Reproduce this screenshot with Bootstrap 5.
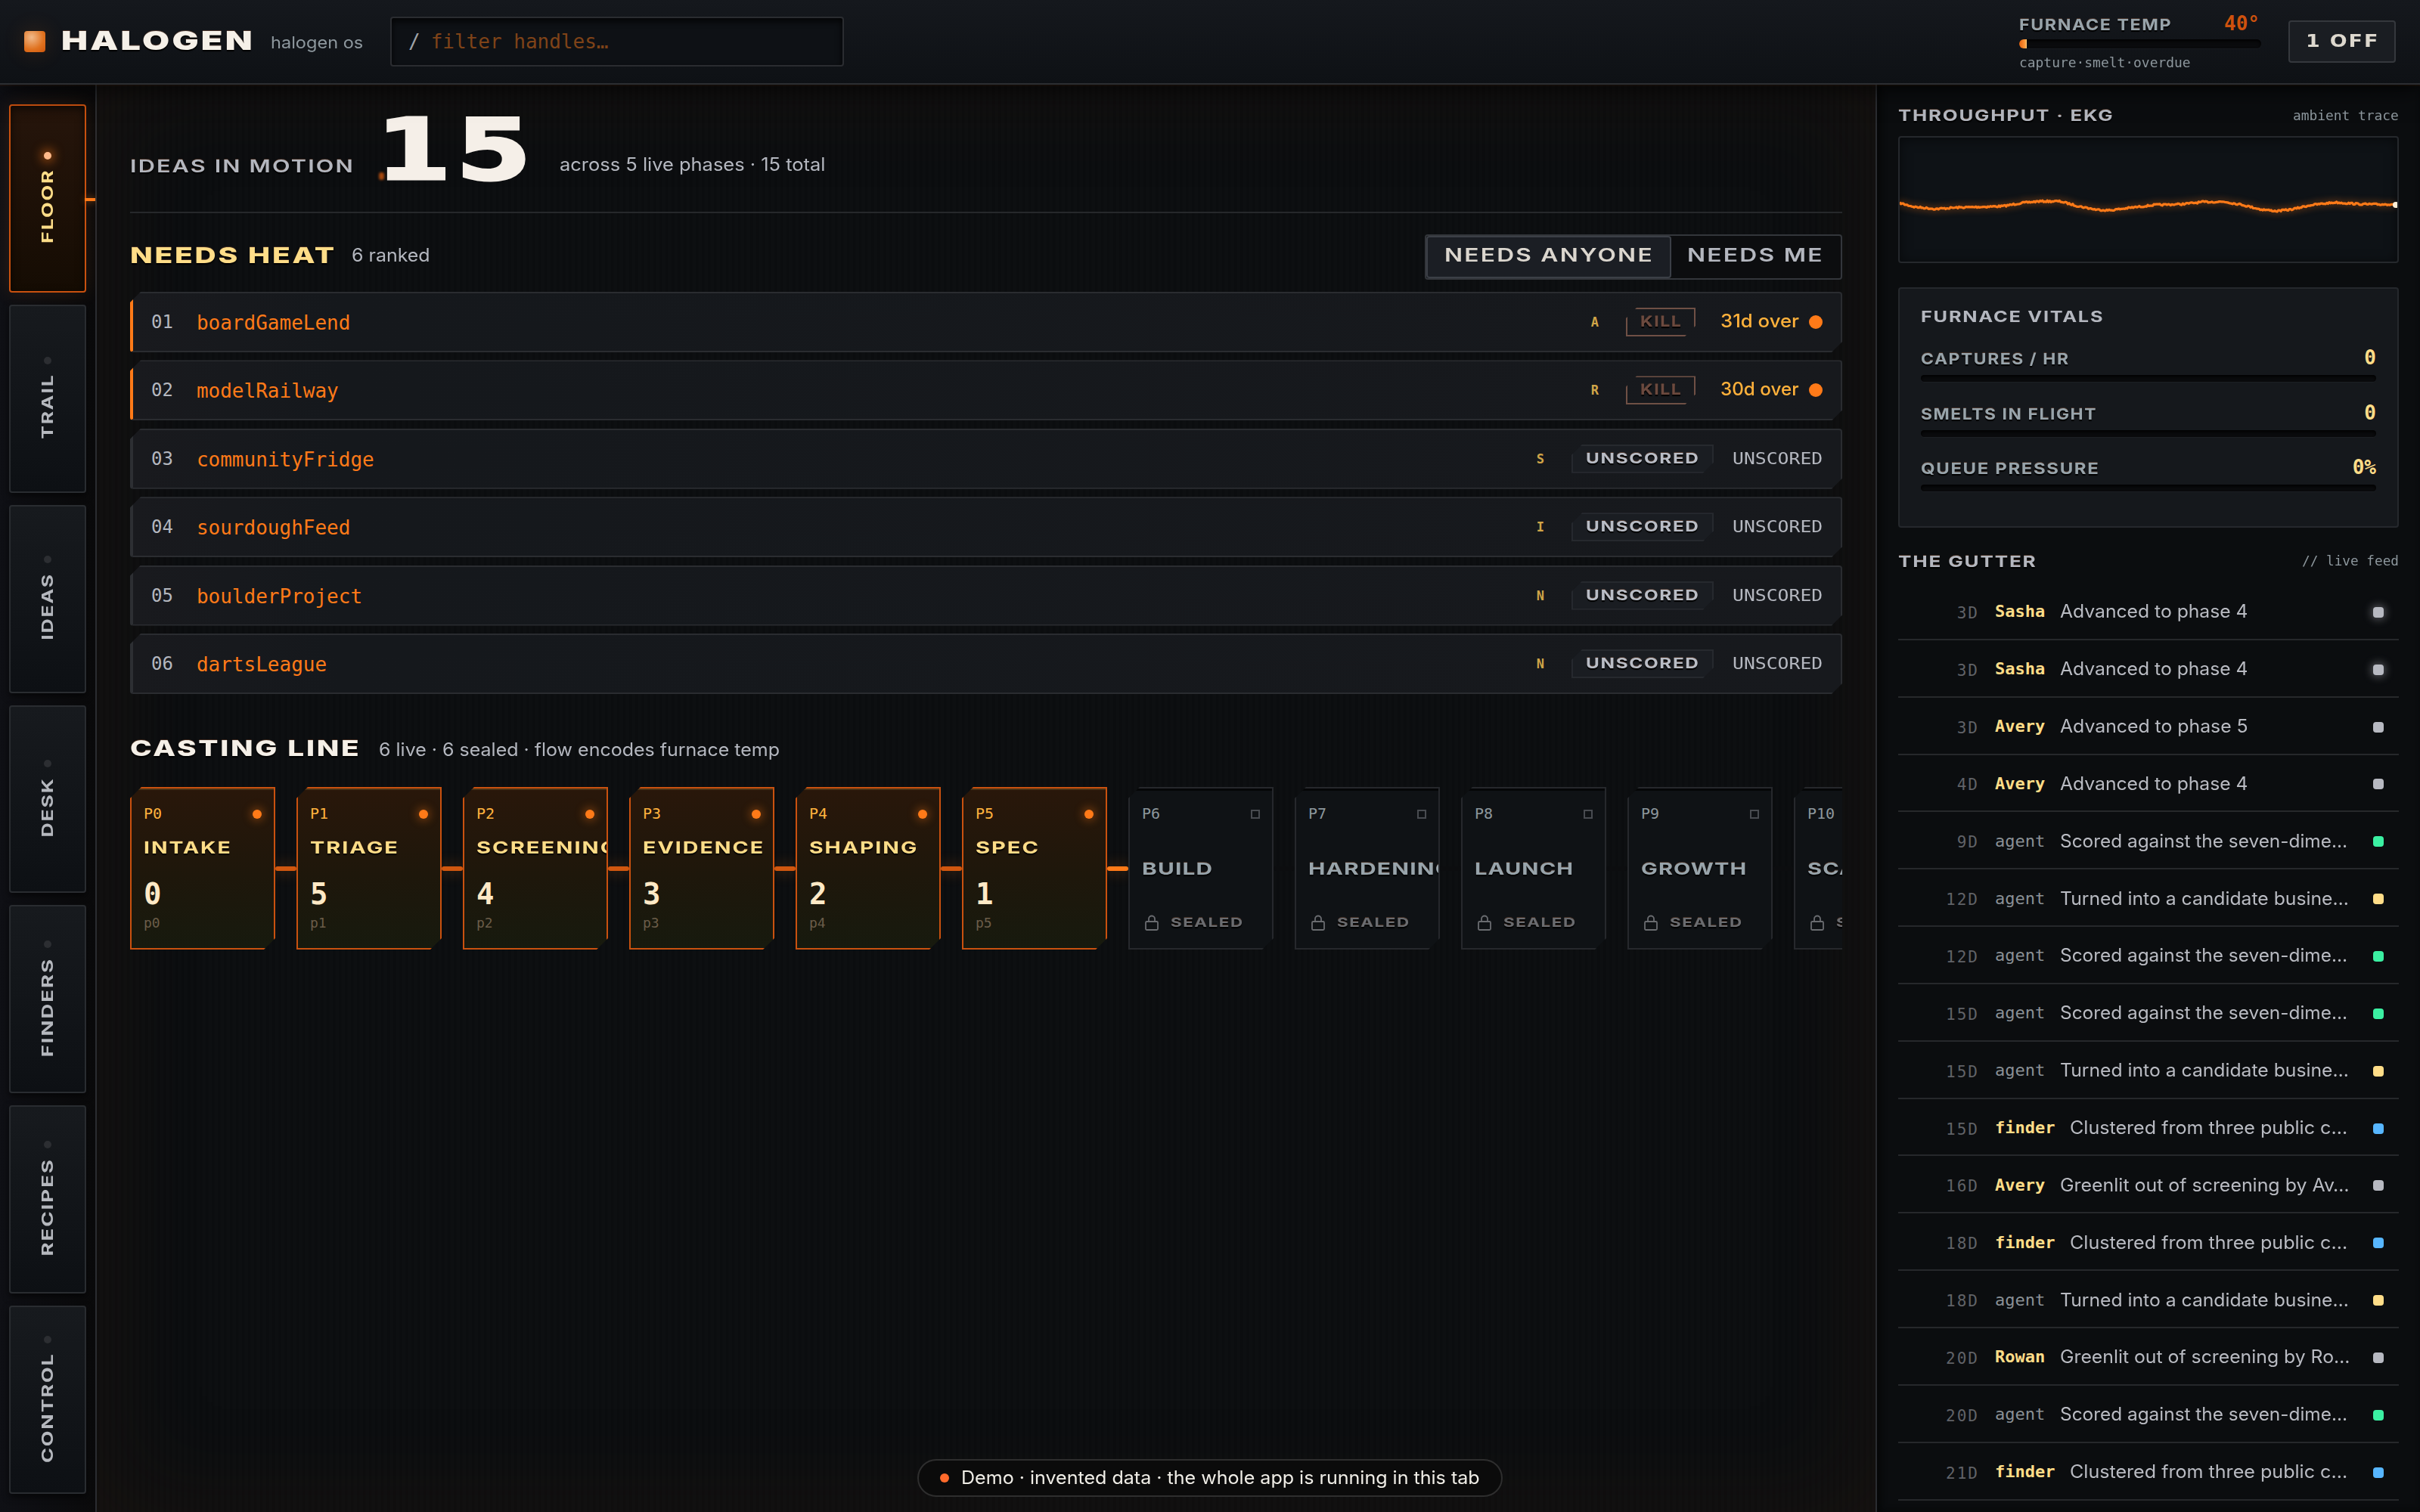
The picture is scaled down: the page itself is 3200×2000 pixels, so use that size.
<!DOCTYPE html>
<html lang="en" data-bs-theme="dark">
<head>
<meta charset="utf-8">
<meta name="viewport" content="width=device-width, initial-scale=1">
<title>Halogen OS</title>
<link href="https://cdn.jsdelivr.net/npm/bootstrap@5.3.0/dist/css/bootstrap.min.css" rel="stylesheet">
<style>
:root{--line:#2a2c30;--hot:#ff7a18;--ember:#c9510f;--gold:#ffdd88;--ash:#b4b7bf;--steel:#98a4ab}
body{width:3200px;height:2000px;overflow:hidden;margin:0;background:#0b0c0e;color:var(--ash);font-family:Inter,"Liberation Sans",sans-serif;font-size:24px;line-height:40px}
.mono{font-family:"DejaVu Sans Mono","Liberation Mono",monospace}
.wide{font-weight:700;letter-spacing:.07em;text-shadow:0 2px 1px #000,0 -1px 0 rgba(255,150,90,.22)}
[data-w]{display:block;flex:none;white-space:nowrap}
[data-w]>span{display:inline-block;transform-origin:0 50%}
/* header */
.topbar{height:112px;border-bottom:2px solid #2c2e32;background:linear-gradient(#15181d,#0e1115);box-shadow:0 6px 30px rgba(0,0,0,.7),0 2px 0 rgba(255,122,24,.07);position:relative;z-index:2;padding:0 32px}
.brandcube{width:28px;height:28px;border-radius:4px;background:radial-gradient(circle at 35% 30%,#f0b989,#e0721f 60%,#cf560c);box-shadow:0 0 30px rgba(255,122,24,.16);margin-right:21px}
.searchbox{width:600px;height:66px;border:2px solid var(--line);border-radius:4px;background:#0e1115;box-shadow:inset 0 4px 10px rgba(0,0,0,.8);margin-left:36px;padding-left:22px}
.offbtn{width:142px;height:56px;border:2px solid #35383d;border-radius:4px;background:#1a1d22;color:#ddd8ce;margin-left:36px;padding-left:21px;font-family:"DejaVu Sans",sans-serif}
.gauge{width:320px;margin-top:4px}
.track{background:#0a0b0d;border-radius:6px;box-shadow:inset 0 2px 4px #000,0 1px 0 rgba(255,255,255,.03)}
/* rail */
.shell{height:1888px}
.rail{width:128px;border-right:2px solid var(--line);background:linear-gradient(90deg,#0f1015,#0a0a0b);padding:26px 12px 24px;gap:16px}
.railtab{flex:1 1 0;border:2px solid #292c30;border-radius:4px;background:linear-gradient(#171a1e,#0d1014);box-shadow:0 4px 10px rgba(0,0,0,.6);position:relative;gap:14px;padding-bottom:3px}
.railtab i{width:10px;height:10px;border-radius:50%;background:#2c2e32}
.railtab b{display:flex;align-items:center;justify-content:center;writing-mode:vertical-rl;line-height:24px;width:24px;font-size:20px;color:#b5b8be;text-shadow:none;font-weight:700}
.railtab b span{flex:none}
.railtab.on{border-color:var(--ember);background:linear-gradient(#26150b,#150c03);box-shadow:inset 0 4px 12px rgba(0,0,0,.6),0 0 26px rgba(255,122,24,.12)}
.railtab.on i{background:#ffb98a;box-shadow:0 0 14px 3px rgba(255,122,24,.6)}
.railtab.on b{color:var(--gold)}
.railtab.on::after{content:"";position:absolute;right:-14px;top:122px;width:14px;height:4px;background:var(--hot);box-shadow:0 0 10px rgba(255,122,24,.6)}
/* floor */
.floor{flex:1;min-width:0;padding:0 44px;position:relative;background:repeating-linear-gradient(90deg,rgba(0,0,0,.14) 0 3px,transparent 4px 8px),#0d0f11;box-shadow:inset 0 0 130px 10px rgba(66,34,14,.2)}
.motion{height:170px;border-bottom:2px solid #26282b}
.bignum{font-family:"DejaVu Sans",sans-serif;font-size:112px;line-height:120px;font-weight:700;letter-spacing:.04em;color:#f5efe8;-webkit-text-stroke:3px #f5efe8;margin:26px 37px 0 30px;position:relative}
.bignum::before{content:"";position:absolute;left:4px;bottom:20px;width:7px;height:10px;background:#a4480f;border-radius:3px;filter:blur(1.5px)}
.heathead{height:104px;padding-top:28px}
.toggle{width:552px;height:60px;border:2px solid #33363b;border-radius:4px;background:#0c0d0f;font-weight:600}
.toggle div{height:56px;padding-left:24px;font-size:24px;line-height:51px}
.toggle .sel{width:324px;background:#1b1e24;border:2px solid #3b3f46;border-radius:4px;line-height:48px;color:#dbd6ce;padding-left:22px}
.heatrows{gap:10.4px}
.heatrow{height:80px;border:2px solid var(--line);border-left:4px solid #2d2f33;border-radius:4px;background:linear-gradient(90deg,#191a1e,#15181c 12%,#17191d);clip-path:polygon(14px 0,100% 0,100% calc(100% - 14px),calc(100% - 14px) 100%,0 100%,0 14px);padding:0 24px}
.heatrow.hot{border-left-color:var(--hot)}
.heatrow .handle{color:var(--hot);font-size:26px;margin:2px 0 0 31px}
.who{font-size:17px;font-weight:700;color:#d0a548}
.uns{font-size:21px}
.over{color:#ffb13b;font-weight:500;margin-top:-2px}
.tagbox{height:38px;border:2px solid #26292e;background:#1a1d22;color:#b9bdc6;font-size:19px;line-height:33px;width:188px;padding-left:17px;margin:0 25px 0 36px;clip-path:polygon(14px 0,100% 0,100% calc(100% - 14px),calc(100% - 14px) 100%,0 100%,0 14px)}
.tagbox.kill{width:92px;background:none;border-color:#6f5045;color:#6c4a3f;margin:0 33px 0 36px}
.disc{width:18px;height:18px;border-radius:50%;background:var(--hot);margin-left:13px}
/* casting */
.casthead{height:123px;padding-top:51px}
.castline{overflow:hidden;height:240px}
.mold{width:192px;height:215px;flex:none;border:2px solid var(--ember);background:linear-gradient(#29170a,#1e170b 55%,#171a0e);clip-path:polygon(15px 0,100% 0,100% calc(100% - 15px),calc(100% - 15px) 100%,0 100%,0 15px);padding:0 16px;overflow:hidden;box-shadow:inset 0 2px 0 rgba(255,190,80,.16)}
.mold .code{font-size:20px;height:68px;color:#ffb23e}
.mold .code>:first-child{margin-top:-2px}
.mold .pip{width:12px;height:12px;border-radius:50%;background:var(--hot);box-shadow:0 0 12px 3px rgba(255,122,24,.35)}
.mold .ttl{font-size:21.5px;line-height:22px;height:22px;margin-top:-1px;color:var(--gold)}
.mold .qty{font-size:39px;line-height:44px;font-weight:700;color:#ffe9c6;margin-top:29px}
.mold .pid{font-size:18px;line-height:24px;color:#6b5d49;margin-top:4px}
.mold.shut{background:#0f1215;border-color:#26282c;box-shadow:inset 0 3px 0 #050607}
.mold.shut .code{color:#8d979d}
.mold.shut .pip{border:2px solid #484b50;border-radius:0;background:none;box-shadow:none}
.mold.shut .ttl{color:var(--steel);margin-top:27px;letter-spacing:.04em}
.mold.shut .lockrow{margin-top:49px;color:#6a6c70;font-size:15.5px;line-height:24px;padding-left:4px;gap:16px}
.link{width:28px;height:6px;margin-top:105px;flex:none;border-radius:3px;background:#d1570f;box-shadow:0 0 18px 4px rgba(255,122,24,.16)}
.link.tip{background:var(--hot)}
.link.off{background:#0c0d0f;box-shadow:none}
/* right column */
.side{width:720px;border-left:2px solid var(--line);background:#0b0d0f;padding:0 28px;box-shadow:inset 4px 0 8px #050606}
.sidehead{height:68px;padding-top:21px}
.side .cap{font-size:20px}
.fine{font-size:18px;color:#8d979d}
.scope{height:168px;border:2px solid #25282c;border-radius:4px;background:#0e1216;box-shadow:inset 0 2px 16px rgba(0,0,0,.5)}
.vitals{height:318px;margin-top:32px;border:2px solid #25282c;border-radius:4px;background:#15181c;padding:20px 28px 0}
.vital{height:72.5px}
.vital>.d-flex{height:50px}
.vital .val{font-size:26px;font-weight:700;color:var(--gold);padding-top:8px}
.feedrow{height:75.85px;border-bottom:2px solid #26282b;padding:3px 20px 0 0}
.age{width:107px;text-align:right;font-size:21px;letter-spacing:2px;color:#606267;margin-top:3px}
.by{font-size:22px;margin:0 20px 0 21px;color:#8a9095}
.by.human{font-weight:700;color:var(--gold)}
.say{color:#b9bbc2}
.chip{width:14px;height:14px;border-radius:4px;background:#b7b9c1;margin-top:1px}
.glow{box-shadow:0 0 12px 2px rgba(183,185,193,.45)}
.g{background:#3bf0a2}.y{background:var(--gold)}.b{background:#57b6ff}
.demo{position:absolute;left:1213px;top:1930px;width:774px;height:50px;border:2px solid #2e2e2e;border-radius:25px;background:#0b0b0b;color:#efede6;z-index:5;padding-left:28px}
.demo i{width:12px;height:12px;border-radius:50%;background:#ff6a2b;margin-right:16px}
</style>
</head>
<body>
<header class="topbar d-flex align-items-center">
  <div class="brandcube"></div>
  <div class="wide" style="font-size:34px;font-weight:900;color:#f5f0e8;margin-top:-3px" data-w="252">HALOGEN</div>
  <div style="font-size:22px;color:#8d979d;margin-left:25px;margin-top:2px" data-w="122">halogen os</div>
  <div class="searchbox d-flex align-items-center mono" style="font-size:26px"><span style="color:#a0a4a8">/</span><span style="color:#7f4318;margin-left:14px">filter handles…</span></div>
  <div class="gauge ms-auto">
    <div class="d-flex justify-content-between align-items-center" style="height:34px">
      <div class="wide" style="font-size:20px;color:var(--steel);margin-top:3px" data-w="200">FURNACE TEMP</div>
      <div class="mono fw-bold" style="font-size:26px;color:#cf520d;margin:0 2px 0 0">40°</div>
    </div>
    <div class="track overflow-hidden" style="height:12px;margin-top:4px"><div class="h-100" style="width:10px;background:linear-gradient(90deg,#e4620f,#ff9a3c 80%,#ffd080)"></div></div>
    <div class="mono fine" style="line-height:34px;padding-top:2px" data-w="227">capture·smelt·overdue</div>
  </div>
  <div class="offbtn wide d-flex align-items-center" style="font-size:22.5px;line-height:50px;padding-bottom:3px;text-shadow:none" data-w="95">1 OFF</div>
</header>

<div class="shell d-flex">
  <nav class="rail d-flex flex-column">
    <div class="railtab on d-flex flex-column align-items-center justify-content-center"><i></i><b class="wide" data-h="96">FLOOR</b></div>
    <div class="railtab d-flex flex-column align-items-center justify-content-center"><i></i><b class="wide" data-h="84">TRAIL</b></div>
    <div class="railtab d-flex flex-column align-items-center justify-content-center"><i></i><b class="wide" data-h="87">IDEAS</b></div>
    <div class="railtab d-flex flex-column align-items-center justify-content-center"><i></i><b class="wide" data-h="78">DESK</b></div>
    <div class="railtab d-flex flex-column align-items-center justify-content-center"><i></i><b class="wide" data-h="129">FINDERS</b></div>
    <div class="railtab d-flex flex-column align-items-center justify-content-center"><i></i><b class="wide" data-h="128">RECIPES</b></div>
    <div class="railtab d-flex flex-column align-items-center justify-content-center"><i></i><b class="wide" data-h="143">CONTROL</b></div>
  </nav>

  <main class="floor">
    <section class="motion d-flex align-items-start">
      <div class="wide" style="font-size:23px;font-weight:600;margin-top:88px" data-w="295">IDEAS IN MOTION</div>
      <div class="bignum" data-w="206">15</div>
      <div style="margin-top:86px" data-w="352">across 5 live phases · 15 total</div>
    </section>

    <section>
      <div class="heathead d-flex align-items-start">
        <div class="wide" style="font-size:29px;font-weight:800;color:var(--gold);margin-top:8px" data-w="270">NEEDS HEAT</div>
        <div style="margin:8px 0 0 23px" data-w="104">6 ranked</div>
        <div class="toggle d-flex ms-auto wide" style="text-shadow:none">
          <div class="sel"><div class="p-0" style="line-height:48px" data-w="274">NEEDS ANYONE</div></div>
          <div style="padding-left:21px"><div class="p-0" data-w="178">NEEDS ME</div></div>
        </div>
      </div>
      <div class="heatrows d-flex flex-column">
        <div class="heatrow hot d-flex align-items-center"><span class="mono">01</span><span class="mono handle">boardGameLend</span><span class="mono who ms-auto">A</span><div class="tagbox kill wide" data-w="54">KILL</div><div class="over" data-w="104">31d over</div><span class="disc"></span></div>
        <div class="heatrow hot d-flex align-items-center"><span class="mono">02</span><span class="mono handle">modelRailway</span><span class="mono who ms-auto">R</span><div class="tagbox kill wide" data-w="54">KILL</div><div class="over" data-w="104">30d over</div><span class="disc"></span></div>
        <div class="heatrow d-flex align-items-center"><span class="mono">03</span><span class="mono handle">communityFridge</span><span class="mono who ms-auto">S</span><div class="tagbox wide" data-w="149">UNSCORED</div><div class="mono uns" data-w="119">UNSCORED</div></div>
        <div class="heatrow d-flex align-items-center"><span class="mono">04</span><span class="mono handle">sourdoughFeed</span><span class="mono who ms-auto">I</span><div class="tagbox wide" data-w="149">UNSCORED</div><div class="mono uns" data-w="119">UNSCORED</div></div>
        <div class="heatrow d-flex align-items-center"><span class="mono">05</span><span class="mono handle">boulderProject</span><span class="mono who ms-auto">N</span><div class="tagbox wide" data-w="149">UNSCORED</div><div class="mono uns" data-w="119">UNSCORED</div></div>
        <div class="heatrow d-flex align-items-center"><span class="mono">06</span><span class="mono handle">dartsLeague</span><span class="mono who ms-auto">N</span><div class="tagbox wide" data-w="149">UNSCORED</div><div class="mono uns" data-w="119">UNSCORED</div></div>
      </div>
    </section>

    <section>
      <div class="casthead d-flex align-items-start">
        <div class="wide" style="font-size:29px;font-weight:800;color:#f5f0e8;margin-top:1px" data-w="303">CASTING LINE</div>
        <div style="margin:3px 0 0 26px" data-w="530">6 live · 6 sealed · flow encodes furnace temp</div>
      </div>
      <div class="castline d-flex align-items-start">
        <div class="mold"><div class="code mono d-flex justify-content-between align-items-center"><span>P0</span><span class="pip"></span></div><div class="ttl wide" data-w="114">INTAKE</div><div class="qty mono">0</div><div class="pid mono">p0</div></div><div class="link"></div>
        <div class="mold"><div class="code mono d-flex justify-content-between align-items-center"><span>P1</span><span class="pip"></span></div><div class="ttl wide" data-w="116">TRIAGE</div><div class="qty mono">5</div><div class="pid mono">p1</div></div><div class="link"></div>
        <div class="mold"><div class="code mono d-flex justify-content-between align-items-center"><span>P2</span><span class="pip"></span></div><div class="ttl wide" data-w="186">SCREENING</div><div class="qty mono">4</div><div class="pid mono">p2</div></div><div class="link"></div>
        <div class="mold"><div class="code mono d-flex justify-content-between align-items-center"><span>P3</span><span class="pip"></span></div><div class="ttl wide" data-w="159">EVIDENCE</div><div class="qty mono">3</div><div class="pid mono">p3</div></div><div class="link"></div>
        <div class="mold"><div class="code mono d-flex justify-content-between align-items-center"><span>P4</span><span class="pip"></span></div><div class="ttl wide" data-w="142">SHAPING</div><div class="qty mono">2</div><div class="pid mono">p4</div></div><div class="link"></div>
        <div class="mold"><div class="code mono d-flex justify-content-between align-items-center"><span>P5</span><span class="pip"></span></div><div class="ttl wide" data-w="83">SPEC</div><div class="qty mono">1</div><div class="pid mono">p5</div></div><div class="link tip"></div>
        <div class="mold shut"><div class="code mono d-flex justify-content-between align-items-center"><span>P6</span><span class="pip"></span></div><div class="ttl wide" data-w="93">BUILD</div><div class="lockrow d-flex align-items-center"><svg width="18" height="22" viewBox="0 0 18 22" fill="none" stroke="currentColor" stroke-width="1.8"><rect x="1" y="9" width="16" height="11" rx="1.5"/><path d="M5 9V5.5a4 4 0 0 1 8 0V9"/></svg><div class="wide" data-w="95">SEALED</div></div></div><div class="link off"></div>
        <div class="mold shut"><div class="code mono d-flex justify-content-between align-items-center"><span>P7</span><span class="pip"></span></div><div class="ttl wide" data-w="191">HARDENING</div><div class="lockrow d-flex align-items-center"><svg width="18" height="22" viewBox="0 0 18 22" fill="none" stroke="currentColor" stroke-width="1.8"><rect x="1" y="9" width="16" height="11" rx="1.5"/><path d="M5 9V5.5a4 4 0 0 1 8 0V9"/></svg><div class="wide" data-w="95">SEALED</div></div></div><div class="link off"></div>
        <div class="mold shut"><div class="code mono d-flex justify-content-between align-items-center"><span>P8</span><span class="pip"></span></div><div class="ttl wide" data-w="130">LAUNCH</div><div class="lockrow d-flex align-items-center"><svg width="18" height="22" viewBox="0 0 18 22" fill="none" stroke="currentColor" stroke-width="1.8"><rect x="1" y="9" width="16" height="11" rx="1.5"/><path d="M5 9V5.5a4 4 0 0 1 8 0V9"/></svg><div class="wide" data-w="95">SEALED</div></div></div><div class="link off"></div>
        <div class="mold shut"><div class="code mono d-flex justify-content-between align-items-center"><span>P9</span><span class="pip"></span></div><div class="ttl wide" data-w="139">GROWTH</div><div class="lockrow d-flex align-items-center"><svg width="18" height="22" viewBox="0 0 18 22" fill="none" stroke="currentColor" stroke-width="1.8"><rect x="1" y="9" width="16" height="11" rx="1.5"/><path d="M5 9V5.5a4 4 0 0 1 8 0V9"/></svg><div class="wide" data-w="95">SEALED</div></div></div><div class="link off"></div>
        <div class="mold shut"><div class="code mono d-flex justify-content-between align-items-center"><span>P10</span><span class="pip"></span></div><div class="ttl wide" data-w="100">SCALE</div><div class="lockrow d-flex align-items-center"><svg width="18" height="22" viewBox="0 0 18 22" fill="none" stroke="currentColor" stroke-width="1.8"><rect x="1" y="9" width="16" height="11" rx="1.5"/><path d="M5 9V5.5a4 4 0 0 1 8 0V9"/></svg><div class="wide" data-w="95">SEALED</div></div></div>
      </div>
    </section>
  </main>

  <aside class="side">
    <div class="sidehead d-flex justify-content-between"><div class="wide cap" data-w="284">THROUGHPUT · EKG</div><div class="mono fine" data-w="140">ambient trace</div></div>
    <div class="scope overflow-hidden"><svg class="d-block" width="658" height="164" viewBox="0 0 658 164" fill="none"><polyline id="trace" stroke="#ff7a18" stroke-width="3.2" stroke-linejoin="round" style="filter:drop-shadow(0 0 5px rgba(255,122,24,.6))"/><circle cx="656" cy="89" r="4" fill="#fff0d8"/></svg></div>
    <div class="vitals">
      <div class="wide cap" style="line-height:34px;margin-bottom:9px;text-shadow:none" data-w="241">FURNACE VITALS</div>
      <div class="vital"><div class="d-flex justify-content-between"><div class="wide cap" style="color:var(--steel);padding-top:10px" data-w="195">CAPTURES / HR</div><span class="mono val">0</span></div><div class="track" style="height:9px;margin-top:1px"></div></div>
      <div class="vital"><div class="d-flex justify-content-between"><div class="wide cap" style="color:var(--steel);padding-top:10px" data-w="232">SMELTS IN FLIGHT</div><span class="mono val">0</span></div><div class="track" style="height:9px;margin-top:1px"></div></div>
      <div class="vital"><div class="d-flex justify-content-between"><div class="wide cap" style="color:var(--steel);padding-top:10px" data-w="235">QUEUE PRESSURE</div><span class="mono val">0%</span></div><div class="track" style="height:9px;margin-top:1px"></div></div>
    </div>
    <div class="d-flex justify-content-between" style="height:73px;padding-top:25px"><div class="wide cap" data-w="182">THE GUTTER</div><div class="mono fine" style="margin-top:-1px" data-w="128">// live feed</div></div>
    <div>
      <div class="feedrow d-flex align-items-center"><span class="mono age">3D</span><span class="mono by human">Sasha</span><div class="say" data-w="249">Advanced to phase 4</div><span class="chip glow ms-auto"></span></div>
      <div class="feedrow d-flex align-items-center"><span class="mono age">3D</span><span class="mono by human">Sasha</span><div class="say" data-w="249">Advanced to phase 4</div><span class="chip glow ms-auto"></span></div>
      <div class="feedrow d-flex align-items-center"><span class="mono age">3D</span><span class="mono by human">Avery</span><div class="say" data-w="249">Advanced to phase 5</div><span class="chip ms-auto"></span></div>
      <div class="feedrow d-flex align-items-center"><span class="mono age">4D</span><span class="mono by human">Avery</span><div class="say" data-w="249">Advanced to phase 4</div><span class="chip ms-auto"></span></div>
      <div class="feedrow d-flex align-items-center"><span class="mono age">9D</span><span class="mono by">agent</span><div class="say" data-w="380">Scored against the seven-dime…</div><span class="chip g ms-auto"></span></div>
      <div class="feedrow d-flex align-items-center"><span class="mono age">12D</span><span class="mono by">agent</span><div class="say" data-w="382">Turned into a candidate busine…</div><span class="chip y ms-auto"></span></div>
      <div class="feedrow d-flex align-items-center"><span class="mono age">12D</span><span class="mono by">agent</span><div class="say" data-w="380">Scored against the seven-dime…</div><span class="chip g ms-auto"></span></div>
      <div class="feedrow d-flex align-items-center"><span class="mono age">15D</span><span class="mono by">agent</span><div class="say" data-w="380">Scored against the seven-dime…</div><span class="chip g ms-auto"></span></div>
      <div class="feedrow d-flex align-items-center"><span class="mono age">15D</span><span class="mono by">agent</span><div class="say" data-w="382">Turned into a candidate busine…</div><span class="chip y ms-auto"></span></div>
      <div class="feedrow d-flex align-items-center"><span class="mono age">15D</span><span class="mono by human">finder</span><div class="say" data-w="367">Clustered from three public c…</div><span class="chip b ms-auto"></span></div>
      <div class="feedrow d-flex align-items-center"><span class="mono age">16D</span><span class="mono by human">Avery</span><div class="say" data-w="383">Greenlit out of screening by Av…</div><span class="chip ms-auto"></span></div>
      <div class="feedrow d-flex align-items-center"><span class="mono age">18D</span><span class="mono by human">finder</span><div class="say" data-w="367">Clustered from three public c…</div><span class="chip b ms-auto"></span></div>
      <div class="feedrow d-flex align-items-center"><span class="mono age">18D</span><span class="mono by">agent</span><div class="say" data-w="382">Turned into a candidate busine…</div><span class="chip y ms-auto"></span></div>
      <div class="feedrow d-flex align-items-center"><span class="mono age">20D</span><span class="mono by human">Rowan</span><div class="say" data-w="383">Greenlit out of screening by Ro…</div><span class="chip ms-auto"></span></div>
      <div class="feedrow d-flex align-items-center"><span class="mono age">20D</span><span class="mono by">agent</span><div class="say" data-w="380">Scored against the seven-dime…</div><span class="chip g ms-auto"></span></div>
      <div class="feedrow d-flex align-items-center"><span class="mono age">21D</span><span class="mono by human">finder</span><div class="say" data-w="367">Clustered from three public c…</div><span class="chip b ms-auto"></span></div>
    </div>
  </aside>
</div>
<div class="demo d-flex align-items-center"><i></i><div data-w="686">Demo · invented data · the whole app is running in this tab</div></div>

<script src="https://cdn.jsdelivr.net/npm/bootstrap@5.3.0/dist/js/bootstrap.bundle.min.js"></script>
<script>
function wrapText(el){const s=document.createElement('span');s.textContent=el.textContent;el.textContent='';el.appendChild(s);return s}
document.querySelectorAll('[data-w]').forEach(el=>{
  const s=wrapText(el),w=+el.dataset.w,ls=parseFloat(getComputedStyle(s).letterSpacing)||0;
  s.style.transform='scaleX('+(w/(s.offsetWidth-ls)).toFixed(4)+')';
  if(!el.matches('.tagbox,.offbtn'))el.style.width=w+'px';
});
document.querySelectorAll('[data-h]').forEach(el=>{
  const s=wrapText(el),h=+el.dataset.h;
  s.style.transformOrigin='50% 50%';
  s.style.transform='rotate(180deg) scaleY('+(h/(s.offsetHeight-1.4)).toFixed(4)+')';
  el.style.height=h+'px';
});
// Ambient trace: control levels, interpolated with a little jitter.
const pts=[[0,86.6],[19,91.6],[47,94.4],[75,92.6],[109,91.6],[137,90.7],[160,86.6],[184,84.3],[212,84.3],[236,90.7],[260,95.3],[278,96.2],[307,92.6],[335,89.3],[373,88],[401,85.2],[429,84.8],[453,88.9],[477,94.9],[498,97.2],[519,94.9],[543,89.3],[576,85.7],[609,88],[637,88.4],[656,88]];
let out=[],k=0,seed=7;
for(let x=0;x<=656;x+=1.6){while(k<pts.length-2&&x>pts[k+1][0])k++;
  const [a,b]=[pts[k],pts[k+1]],t=(x-a[0])/(b[0]-a[0]);
  seed=(seed*16807)%2147483647;
  out.push(x.toFixed(1)+','+(a[1]+(b[1]-a[1])*t+(seed/2147483647-.5)*2.2).toFixed(1));}
document.getElementById('trace').setAttribute('points',out.join(' '));
</script>
</body>
</html>
